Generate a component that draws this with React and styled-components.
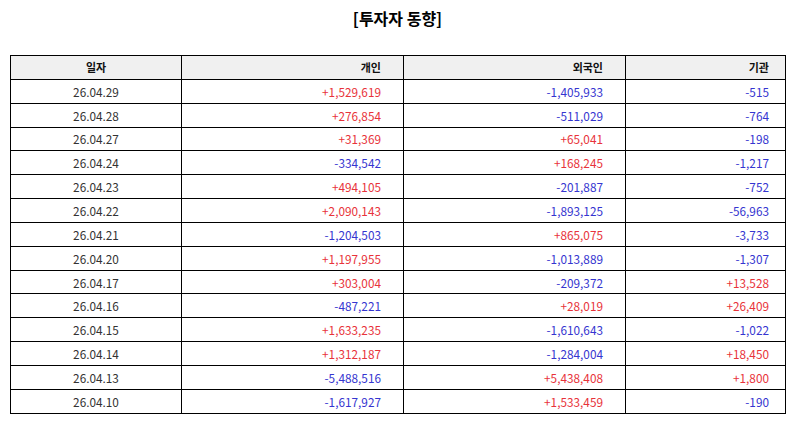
import React from "react";
import styled, { createGlobalStyle } from "styled-components";

const rows = [
  ["26.04.29", "+1,529,619", "-1,405,933", "-515"],
  ["26.04.28", "+276,854", "-511,029", "-764"],
  ["26.04.27", "+31,369", "+65,041", "-198"],
  ["26.04.24", "-334,542", "+168,245", "-1,217"],
  ["26.04.23", "+494,105", "-201,887", "-752"],
  ["26.04.22", "+2,090,143", "-1,893,125", "-56,963"],
  ["26.04.21", "-1,204,503", "+865,075", "-3,733"],
  ["26.04.20", "+1,197,955", "-1,013,889", "-1,307"],
  ["26.04.17", "+303,004", "-209,372", "+13,528"],
  ["26.04.16", "-487,221", "+28,019", "+26,409"],
  ["26.04.15", "+1,633,235", "-1,610,643", "-1,022"],
  ["26.04.14", "+1,312,187", "-1,284,004", "+18,450"],
  ["26.04.13", "-5,488,516", "+5,438,408", "+1,800"],
  ["26.04.10", "-1,617,927", "+1,533,459", "-190"],
];

const heads = ["일자", "개인", "외국인", "기관"];
const widths = [171, 222, 222, 160];
const pads = [0, 22, 22, 16];

const GlobalStyle = createGlobalStyle`
  body {
    margin: 0;
    background: #fff;
    font-family: "Noto Sans CJK KR", "DejaVu Sans", sans-serif;
  }
`;

const App = () => {
  return (
    <Wrap>
      <GlobalStyle />
      <Title>[투자자 동향]</Title>
      <Table>
        <colgroup>
          {widths.map((w, idx) => (
            <col key={idx} style={{ width: w }} />
          ))}
        </colgroup>
        <thead>
          <tr>
            {heads.map((item, idx) => (
              <Th key={idx} $first={idx === 0} $pad={pads[idx]}>
                {item}
              </Th>
            ))}
          </tr>
        </thead>
        <tbody>
          {rows.map((row) => (
            <tr key={row[0]}>
              <DateCell>{row[0]}</DateCell>
              {row.slice(1).map((v, idx) => (
                <NumCell key={idx} $up={v.startsWith("+")} $pad={pads[idx + 1]}>
                  {v}
                </NumCell>
              ))}
            </tr>
          ))}
        </tbody>
      </Table>
    </Wrap>
  );
};

const Wrap = styled.div`
  width: 794px;
  padding: 6px 9px 0 10px;
  box-sizing: border-box;
`;
const Title = styled.h2`
  margin: 0 0 25px;
  height: 24px;
  line-height: 24px;
  text-align: center;
  font-size: 16px;
  font-weight: 700;
  color: #000;
`;
const Table = styled.table`
  width: 775px;
  table-layout: fixed;
  border-collapse: collapse;
  font-size: 11.8px;
`;
const Th = styled.th`
  height: 22.85px;
  padding: 0 ${(props) => props.$pad}px 0 0;
  border: 1px solid #000;
  background: #f0f0f0;
  font-weight: 700;
  font-size: 11px;
  color: #111;
  text-align: ${(props) => (props.$first ? "center" : "right")};
`;
const DateCell = styled.td`
  height: 22.85px;
  padding: 0;
  border: 1px solid #000;
  text-align: center;
  color: #333;
`;
const NumCell = styled.td`
  height: 22.85px;
  padding: 0 ${(props) => props.$pad}px 0 0;
  border: 1px solid #000;
  text-align: right;
  color: ${(props) => (props.$up ? "#e8333a" : "#3535d0")};
`;

export default App;
